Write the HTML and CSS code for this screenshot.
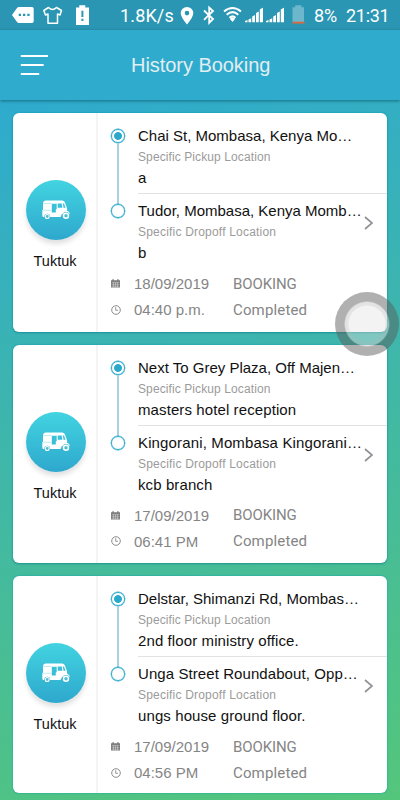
FILE: index.html
```
<!DOCTYPE html>
<html lang="en">
<head>
<meta charset="utf-8">
<meta name="viewport" content="width=device-width">
<title>History Booking</title>
<link rel="stylesheet" href="styles.css">
</head>
<body>
<svg class="defs" width="0" height="0" aria-hidden="true">
  <symbol id="tuktuk" viewBox="0 0 28 20">
    <path fill="#fff" fill-rule="evenodd" d="M3.500 .5H20Q22 .5 22.800 2.300L25 8.200V10.500Q27.800 11.500 27.800 14H20L18.500 17H1.200Q.3 17 .3 15V10.300L1 9.500V3Q1.300 .5 3.500 .5ZM9.800 3.800V12.600H13.800V9.200H14.700V3.800ZM15.700 3.400V7.800H20.300L19.800 3.400ZM20.900 3.400L21.500 7.800H23.600L22 3.400Z"/>
    <path d="M1.500 3.500H9.500M.3 10.300H9.500" stroke="#7fd5e4" stroke-width=".5"/>
    <circle cx="5.200" cy="16.700" r="3" fill="#32b2d0"/>
    <circle cx="5.200" cy="16.500" r="2" fill="#52bed6" stroke="#fff" stroke-width="1.100"/>
    <circle cx="24" cy="15.700" r="3.600" fill="#32b2d0"/>
    <circle cx="24" cy="15.700" r="2.500" fill="#52bed6" stroke="#fff" stroke-width="1.500"/>
  </symbol>
  <symbol id="calendar" viewBox="0 0 9 9">
    <path fill="#7b7b7b" d="M0 1.200h1.300V.2h1.500v1h3.400v-1h1.500v1H9v7.300H0z"/>
    <path d="M.7 3.400h7.600M.7 5.300h7.600M.7 7.200h7.600M2.500 3.400v5M4.500 3.400v5M6.500 3.400v5" stroke="#d8d8d8" stroke-width=".5"/>
  </symbol>
  <symbol id="clock" viewBox="0 0 10 10">
    <circle cx="5" cy="5" r="4.300" fill="none" stroke="#8c8c8c"/><path d="M4.700 2.200V5.300H7" fill="none" stroke="#8c8c8c" stroke-width=".9"/>
  </symbol>
  <symbol id="signal" viewBox="0 0 18 15">
    <path fill="#fff" d="M0 15v-1.500l2.500-1V15zM3.500 15v-3l2.700-1.200V15zM7.200 15V9l2.800-1.500V15zM11 15V5.500L13.800 4v11zM14.800 15V2L18 0v15z"/>
  </symbol>
</svg>

<div class="status">
  <svg width="120" height="30" viewBox="0 0 120 30" fill="#fff">
    <path d="M12 15l5-7q.8-1 2-1h13q1.700 0 1.700 1.700v12.600q0 1.700-1.700 1.700H19q-1.200 0-2-1z"/>
    <path d="M18.700 13.700h2.300v2.300h-2.300zM23 13.700h2.300v2.300H23zM27.300 13.700h2.300v2.300h-2.300z" fill="#2b96b3"/>
    <path d="M48.500 7.500L43.800 10.500L45.500 15L48 14V23.300H57.500V14L60 15L61.500 10.500L56.500 7.500Q52.500 11.500 48.500 7.500Z" fill="none" stroke="#fff" stroke-width="1.500" stroke-linejoin="round"/>
    <path d="M76 7.500h3.300V5.300h6v2.200H89V25H76z"/>
    <path d="M81.400 10.700h2v6.300h-2zM81.400 18.700h2v2.200h-2z" fill="#2b96b3"/>
  </svg>
  <span class="rate">1.8K/s</span>
  <svg class="status-icons" width="130" height="30" viewBox="180 0 130 30" fill="#fff">
    <path fill-rule="evenodd" d="M187 24.500Q180.700 17 180.700 13.300A6.300 6.300 0 0 1 193.300 13.300Q193.300 17 187 24.500ZM187 10.800A2.300 2.300 0 1 0 187 15.400A2.300 2.300 0 1 0 187 10.800Z"/>
    <path d="M204 10.500L213 19L209.200 22.800V7.500L213 11L204 19.800" fill="none" stroke="#fff" stroke-width="1.800"/>
    <g fill="none" stroke="#fff" stroke-width="2"><path d="M224 11.500Q232.500 4.500 241 11.500M226.700 14.700Q232.500 9.500 238.300 14.700M229.500 17.700Q232.500 15 235.500 17.700"/></g>
    <path d="M229.800 18.700Q232.500 16.500 235.200 18.700L232.500 22z"/>
    <use href="#signal" x="245" y="7.500" width="18" height="15"/>
    <use href="#signal" x="266" y="7.500" width="18" height="15"/>
    <path d="M292.500 7.300h2.700V5.300h6.300v2H304V22H292.500z" fill="#6cb7cb"/>
    <path d="M292.500 21.700h12v1.900h-12z" fill="#d66b42"/>
  </svg>
  <span class="battery">8%</span>
  <span class="time">21:31</span>
</div>

<header class="bar">
  <svg class="menu" width="28" height="22" viewBox="0 0 28 22"><path d="M1.500 2H27.500M1.500 11H23M1.500 20H18.500" stroke="#fff" stroke-width="1.800" stroke-linecap="round"/></svg>
  <h1>History Booking</h1>
</header>

<main>
  <article class="card">
    <div class="vehicle"><div class="disc"><svg width="28" height="20"><use href="#tuktuk"/></svg></div><span>Tuktuk</span></div>
    <div class="details">
      <div class="route">
        <div class="track"><i class="dot full"></i><i class="line"></i><i class="dot"></i></div>
        <div class="stops">
          <div class="stop"><b>Chai St, Mombasa, Kenya Mo…</b><small class="pickup">Specific Pickup Location</small><p>a</p></div>
          <div class="stop last"><b>Tudor, Mombasa, Kenya Momb…</b><small class="dropoff">Specific Dropoff Location</small><p>b</p>
            <svg class="chevron" width="10" height="14" viewBox="0 0 10 14"><path d="M1 1L8 7L1 13"/></svg></div>
        </div>
      </div>
      <div class="meta"><svg width="9" height="9"><use href="#calendar"/></svg><span class="date">18/09/2019</span><em>BOOKING</em></div>
      <div class="meta"><svg width="10" height="10"><use href="#clock"/></svg><span class="hour">04:40 p.m.</span><em class="done">Completed</em></div>
    </div>
  </article>

  <article class="card">
    <div class="vehicle"><div class="disc"><svg width="28" height="20"><use href="#tuktuk"/></svg></div><span>Tuktuk</span></div>
    <div class="details">
      <div class="route">
        <div class="track"><i class="dot full"></i><i class="line"></i><i class="dot"></i></div>
        <div class="stops">
          <div class="stop"><b>Next To Grey Plaza, Off Majen…</b><small class="pickup">Specific Pickup Location</small><p>masters hotel reception</p></div>
          <div class="stop last"><b class="wider">Kingorani, Mombasa Kingorani…</b><small class="dropoff">Specific Dropoff Location</small><p>kcb branch</p>
            <svg class="chevron" width="10" height="14" viewBox="0 0 10 14"><path d="M1 1L8 7L1 13"/></svg></div>
        </div>
      </div>
      <div class="meta"><svg width="9" height="9"><use href="#calendar"/></svg><span class="date">17/09/2019</span><em>BOOKING</em></div>
      <div class="meta"><svg width="10" height="10"><use href="#clock"/></svg><span class="hour">06:41 PM</span><em class="done">Completed</em></div>
    </div>
  </article>

  <article class="card short">
    <div class="vehicle"><div class="disc"><svg width="28" height="20"><use href="#tuktuk"/></svg></div><span>Tuktuk</span></div>
    <div class="details">
      <div class="route">
        <div class="track"><i class="dot full"></i><i class="line"></i><i class="dot"></i></div>
        <div class="stops">
          <div class="stop"><b>Delstar, Shimanzi Rd, Mombas…</b><small class="pickup">Specific Pickup Location</small><p>2nd floor ministry office.</p></div>
          <div class="stop last"><b class="wide">Unga Street Roundabout, Opp…</b><small class="dropoff">Specific Dropoff Location</small><p>ungs house ground floor.</p>
            <svg class="chevron" width="10" height="14" viewBox="0 0 10 14"><path d="M1 1L8 7L1 13"/></svg></div>
        </div>
      </div>
      <div class="meta"><svg width="9" height="9"><use href="#calendar"/></svg><span class="date">17/09/2019</span><em>BOOKING</em></div>
      <div class="meta"><svg width="10" height="10"><use href="#clock"/></svg><span class="hour">04:56 PM</span><em class="done">Completed</em></div>
    </div>
  </article>
</main>
<div class="assist"></div>
</body>
</html>
```
FILE: styles.css
```
* { box-sizing: border-box; }
body {
  margin: 0;
  width: 400px;
  height: 800px;
  overflow: hidden;
  position: relative;
  font-family: "Liberation Sans", Arial, sans-serif;
  color: #111;
  background: linear-gradient(165deg, #2eaacf 10%, #54c67b 100%);
}
.defs { position: absolute; }
svg { display: block; flex: none; }

.status {
  display: flex;
  height: 30px;
  background: #2b96b3;
  color: #fff;
  font: 18px/31px Roboto, sans-serif;
  white-space: nowrap;
}
.rate { width: 60px; letter-spacing: .15px; }
.battery { width: 32px; padding-left: 4px; }
.time { padding-left: 4px; letter-spacing: -.3px; }

.bar {
  position: relative;
  display: flex;
  align-items: center;
  height: 70px;
  padding-left: 20px;
  background: #2fabce;
  box-shadow: 0 1px 3px rgba(0, 60, 70, .55);
}
.bar h1 {
  margin: 0 0 0 83px;
  font-size: 20px;
  font-weight: 400;
  line-height: 24px;
  letter-spacing: -.05px;
  color: #e3eef1;
  white-space: nowrap;
}

main {
  display: flex;
  flex-direction: column;
  gap: 13px;
  padding: 13px 13px 0;
}
.card {
  display: flex;
  height: 218.700px;
  background: #fff;
  border-radius: 6px;
  box-shadow: 0 0 2px #009fae, 0 1px 2px rgba(0, 80, 80, .35);
}
.card.short { height: 217px; box-shadow: 0 0 2px #009fae; }
.vehicle {
  display: flex;
  flex-direction: column;
  align-items: center;
  width: 85px;
  padding-top: 67px;
  border-right: 2px solid #f4f4f4;
  font-size: 14.500px;
}
.vehicle span { margin-top: 13px; line-height: 17px; margin-left: 1px; }
.disc {
  display: flex;
  align-items: center;
  justify-content: center;
  width: 60px;
  height: 60px;
  margin-left: 2px;
  border-radius: 50%;
  background: linear-gradient(#42d3e1, #2ea8cd);
  box-shadow: 0 4px 5px rgba(0, 0, 0, .12);
}

.details { flex: 1; padding: 12px 0 0 12px; }
.route { display: flex; height: 145.500px; }
.track { display: flex; flex-direction: column; align-items: center; width: 16px; padding-top: 4px; }
.dot { width: 14px; height: 14px; flex: none; border: 1.500px solid #2aa9ca; border-radius: 50%; box-shadow: 0 0 0 .4px #2aa9ca; }
.full { background: radial-gradient(circle, #2aa9ca 0 3.500px, #fff 4.300px); }
.line { width: 1.500px; height: 61px; background: #a8d2e0; }

.stops { flex: 1; padding-left: 12px; }
.stop { height: 69px; border-bottom: 1px solid #e2e2e2; white-space: nowrap; }
.stop.last { position: relative; height: 76px; border: 0; padding-top: 6px; }
.stop b { display: block; font-size: 15px; font-weight: 400; line-height: 21px; }
.stop b.wide { letter-spacing: .08px; }
.stop b.wider { letter-spacing: .14px; }
.stop small { display: block; font-size: 12px; line-height: 22px; color: #9b9b9b; }
.stop .pickup { letter-spacing: .1px; }
.stop .dropoff { letter-spacing: .2px; }
.stop p { margin: 0; font-size: 15px; line-height: 19px; letter-spacing: .1px; }
.chevron { position: absolute; top: 22px; right: 13px; fill: none; stroke: #92939a; stroke-width: 1.700; }

.meta { display: flex; align-items: center; height: 26px; padding-left: 1px; font-size: 15px; color: #858585; }
.meta span { width: 99px; }
.meta .date { margin-left: 14px; }
.meta .hour { margin-left: 13px; }
.meta em { font: 400 15px Roboto, sans-serif; letter-spacing: -.1px; color: #858585; }
.meta .done { letter-spacing: .15px; }

.assist {
  position: absolute;
  top: 292px;
  left: 335px;
  width: 64px;
  height: 64px;
  border-radius: 50%;
  background: radial-gradient(circle, rgba(225, 225, 225, .4) 0 18px, rgba(205, 205, 205, .55) 19px 21.500px, rgba(90, 90, 90, .48) 23px);
}
```
